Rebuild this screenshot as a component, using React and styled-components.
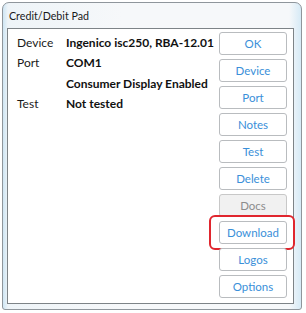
import React from "react";
import styled, { createGlobalStyle } from "styled-components";

const Global = createGlobalStyle`
  html, body { margin: 0; padding: 0; background: #ffffff; }
  body { font-family: "Lato", "Open Sans", sans-serif; }
`;

const Page = styled.div`
  width: 306px;
  height: 313px;
  padding: 2px 4px 3px 2px;
  box-sizing: border-box;
`;

const Window = styled.div`
  height: 100%;
  box-sizing: border-box;
  border: 1px solid #8f969c;
  border-radius: 7px 7px 3px 3px;
  background: linear-gradient(90deg, #cfe6f4 0px, #eef4f8 5px, #f6f8fa 40%, #f6f8fa 96%, #d6eaf6 100%);
  display: flex;
  flex-direction: column;
  padding: 0 7px 5px 4px;
`;

const TitleBar = styled.div`
  height: 25px;
  display: flex;
  align-items: center;
  font-size: 10.7px;
  color: #1a1a1a;
  padding-left: 2px;
`;

const Panel = styled.div`
  flex: 1;
  background: #ffffff;
  border: 1px solid #7d8387;
  display: flex;
  padding: 3px 6px 0 9px;
`;

const Info = styled.div`
  flex: 1;
  display: grid;
  grid-template-columns: 49px 1fr;
  grid-auto-rows: 20.5px;
  align-content: start;
  font-size: 12px;
`;

const Label = styled.div`
  color: #1a1a1a;
  display: flex;
  align-items: center;
`;

const Value = styled.div`
  color: #111;
  font-weight: 700;
  display: flex;
  align-items: center;
  white-space: nowrap;
`;

const Buttons = styled.div`
  display: flex;
  flex-direction: column;
  gap: 4px;
  width: 68px;
`;

const Slot = styled.div`
  position: relative;
`;

const Button = styled.button`
  width: 100%;
  height: 23px;
  box-sizing: border-box;
  border: 1px solid ${p => (p.$disabled ? "#c8c8c8" : "#b9bcbf")};
  border-radius: 3px;
  background: ${p => (p.$disabled ? "#f1f1f1" : "#ffffff")};
  color: ${p => (p.$disabled ? "#8c8c8c" : "#3a8fd9")};
  font-family: "Lato", "Open Sans", sans-serif;
  font-size: 11.5px;
  padding: 0;
  display: flex;
  align-items: center;
  justify-content: center;
`;

const Highlight = styled.div`
  position: absolute;
  left: -10px;
  right: -8px;
  top: -6px;
  bottom: -6px;
  border: 2px solid #e0262e;
  border-radius: 6px;
  pointer-events: none;
`;

const rows = [
  ["Device", "Ingenico isc250, RBA-12.01"],
  ["Port", "COM1"],
  ["", "Consumer Display Enabled"],
  ["Test", "Not tested"],
];

const buttons = ["OK", "Device", "Port", "Notes", "Test", "Delete", "Docs", "Download", "Logos", "Options"];

export default function App() {
  return (
    <>
      <Global />
      <Page>
        <Window>
          <TitleBar>Credit/Debit Pad</TitleBar>
          <Panel>
            <Info>
              {rows.map(([l, v], i) => (
                <React.Fragment key={i}>
                  <Label>{l}</Label>
                  <Value>{v}</Value>
                </React.Fragment>
              ))}
            </Info>
            <Buttons>
              {buttons.map(b => (
                <Slot key={b}>
                  <Button $disabled={b === "Docs"}>{b}</Button>
                  {b === "Download" && <Highlight />}
                </Slot>
              ))}
            </Buttons>
          </Panel>
        </Window>
      </Page>
    </>
  );
}
